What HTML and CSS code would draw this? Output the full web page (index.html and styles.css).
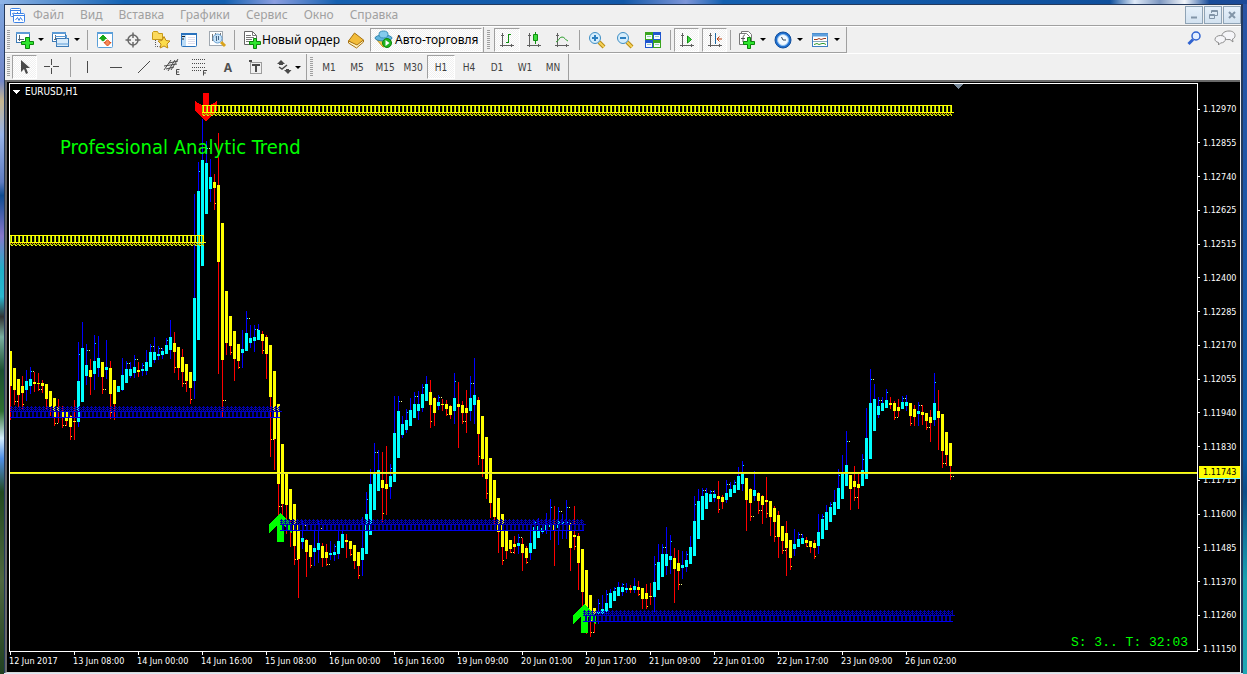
FILE: index.html
```html
<!DOCTYPE html>
<html lang="ru">
<head>
<meta charset="utf-8">
<title>EURUSD,H1</title>
<link rel="stylesheet" href="styles.css">
</head>
<body>
<div class="desktop">
<div class="window">
  <header class="menubar">
    <svg class="app-icon" width="15" height="15" viewBox="0 0 15 15" fill="#fff" stroke="#3c82e6"><rect x=".5" y=".5" width="10" height="8" rx="1"/><path d="M1 2.5h9M2 6l2-1 2 1 2-2"/><rect x="3.500" y="5.500" width="11" height="9" rx="1"/><path d="M4 7.500h10M5.500 12l2-2.500 1.500 3 1.500-3 2 3"/></svg>
    <nav class="menus"><button>Файл</button><button>Вид</button><button>Вставка</button><button>Графики</button><button>Сервис</button><button>Окно</button><button>Справка</button></nav>
    <div class="win-buttons">
      <button aria-label="Свернуть"><svg width="12" height="12"><path d="M3 8.500h6" stroke="#8295a8" stroke-width="2"/></svg></button>
      <button aria-label="Восстановить"><svg width="12" height="12" fill="none" stroke="#8295a8"><path d="M4.500 4V1.500h6v5H8M4 2.500h6"/><path d="M2.500 5.500h5v4h-5zM2 6.500h6"/></svg></button>
      <button aria-label="Закрыть"><svg width="12" height="12"><path d="M3 3l6 6M9 3l-6 6" stroke="#8295a8" stroke-width="2"/></svg></button>
    </div>
  </header>

  <div class="tools-row">
    <div class="toolbar">
      <i class="grip"></i>
      <button class="drop w36" aria-label="Новый график"><svg width="20" height="18"><rect x="1.500" y="1.500" width="13" height="10" fill="#fff" stroke="#3d7ab5"/><path d="M1 2h14" stroke="#5d9bd5" stroke-width="2"/><path d="M4.500 4v6M3 8.500h6" stroke="#567" fill="none"/><path d="M10.500 6.500h4v4h4v3h-4v4h-4v-4h-4v-3h4z" fill="#2ee62e" stroke="#0a860a"/></svg><b class="caret"></b></button>
      <button class="drop w36" aria-label="Профили"><svg width="20" height="18"><rect x="1.500" y="1.500" width="13" height="9" fill="#fff" stroke="#3d7ab5"/><path d="M1 2h14" stroke="#5d9bd5" stroke-width="2"/><path d="M4.500 4v5M3 8.500h3" stroke="#567"/><rect x="5.500" y="7.500" width="12" height="8" fill="#d9ecfb" stroke="#3d7ab5"/><path d="M15.500 4v4M4 5.500h11M5 13h13" stroke="#5d9bd5" fill="none"/></svg><b class="caret"></b></button>
      <i class="sep"></i>
      <button class="w28" aria-label="Обзор рынка"><svg width="18" height="18"><rect x="1.500" y="1.500" width="15" height="15" rx="1" fill="#fff" stroke="#5b9fd9"/><path d="M1 2h16" stroke="#5b9fd9" stroke-width="2"/><path d="M7 4l3.500 3.500-2 0L7 6 5.500 7.500h-2zM7 6l2 2.500-2 1.500-2-1.500z" fill="#17a817" stroke="#17a817"/><path d="M11.500 9l2 1.500v1H15l-3.500 3.500L8 11.500h1.500v-1z" fill="#f58a5a" stroke="#e0501a"/></svg></button>
      <button class="w28" aria-label="Окно данных"><svg width="18" height="18" fill="none" stroke="#686868"><circle cx="9" cy="9" r="5" stroke-width="1.500"/><path d="M9 1.500V7M9 11v5.500M1.500 9H7M11 9h5.500" stroke-width="1.500"/></svg></button>
      <button class="w28" aria-label="Навигатор"><svg width="20" height="18"><path d="M1.500 8V1.500l1-1h4l1 2h4v6h-10z" fill="#fbd95c" stroke="#c79a18"/><path d="M4.500 9v6.500h4" stroke="#555" stroke-dasharray="1 1" fill="none"/><path d="M13 5.500l2 4 4 .5-3 3 .8 4-3.800-2-3.800 2 .8-4-3-3 4-.5z" fill="#fcdc4a" stroke="#c08a12"/></svg></button>
      <button class="w28" aria-label="Терминал"><svg width="18" height="18"><rect x="1.500" y="2.500" width="15" height="13" rx="1" fill="#fff" stroke="#2a72bd"/><path d="M1 3h16" stroke="#2a72bd" stroke-width="2"/><path d="M2 4h4v11H2z" fill="#bcdcf7"/><path d="M2 5.500h3M2 8h2" stroke="#222"/><path d="M8 6.500h7M8 8.500h7M8 10.500h7M8 12.500h7" stroke="#dde"/></svg></button>
      <button class="w28" aria-label="Тестер стратегий"><svg width="19" height="19"><rect x="1.500" y="1.500" width="13" height="14" fill="#fff" stroke="#a0a8b0"/><path d="M4.500 4v7M7.500 3v5M12.500 3v3" stroke="#777"/><circle cx="9.500" cy="8.500" r="4.500" fill="#bfe0fa" fill-opacity=".85" stroke="#6aa0d0"/><path d="M8.500 6v5M10.500 6v4" stroke="#468"/><path d="M13 12l4 4" stroke="#d9a31c" stroke-width="3"/></svg></button>
      <i class="sep"></i>
      <button class="labelled order"><svg width="18" height="19"><path d="M1.500 1.500h8l4 4v9h-12z" fill="#fff" stroke="#666"/><path d="M9.500 1.500v4h4M3 5.500h5M3 7.500h8M3 9.500h6M3 11.500h5" fill="none" stroke="#777"/><path d="M10.500 8.500h3v3h4v3h-4v4h-3v-4h-4v-3h4z" fill="#2ee62e" stroke="#0a860a"/></svg><span>Новый ордер</span></button>
      <button class="w28" aria-label="MetaEditor"><svg width="18" height="18"><path d="M1.500 10l6-8 9 7-6 6z" fill="#f2bc3a" stroke="#a87312"/><path d="M1.500 10v2l8 5 7-6V9l-6.500 5z" fill="#fff3c4" stroke="#a87312"/></svg></button>
      <button class="labelled pressed"><svg width="20" height="19"><path d="M3 10l14 0-3 5.500-5 1.500z" fill="#f0c84a" stroke="#c29318"/><ellipse cx="9.500" cy="8" rx="8.500" ry="3" fill="#5fb4dd" stroke="#2f84ae"/><ellipse cx="9.500" cy="4.500" rx="4.500" ry="3.500" fill="#83cbec" stroke="#3a90b8"/><circle cx="13" cy="13" r="4.500" fill="#20b520" stroke="#0c860c"/><path d="M11.500 10l4 3-4 3z" fill="#fff"/></svg><span>Авто-торговля</span></button>
    </div>
    <div class="toolbar">
      <i class="grip"></i>
      <button class="pressed icon26" aria-label="Бары"><svg width="16" height="16" fill="none" stroke="#606060"><path d="M3.500 1v14M1 13.500h14M2 3.500h3M12.500 12v3"/><path d="M9.500 2v9M10 2.500h2M7 10.500h2" stroke="#109010"/></svg></button>
      <button class="w28" aria-label="Свечи"><svg width="16" height="16" fill="none" stroke="#606060"><path d="M3.500 1v14M1 13.500h14M2 3.500h3M12.500 12v3"/><path d="M9.500 0v12" stroke="#109010"/><path d="M7.500 2.500h4v6h-4z" fill="#3edc3e" stroke="#109010"/></svg></button>
      <button class="w28" aria-label="Линия"><svg width="16" height="16" fill="none" stroke="#606060"><path d="M3.500 1v14M1 13.500h14M2 3.500h3M12.500 12v3"/><path d="M2 10c3-1 3-5 6-5 3 0 3 3 6 4" stroke="#30a030"/></svg></button>
      <i class="sep"></i>
      <button class="w28" aria-label="Увеличить"><svg width="18" height="18"><path d="M11 11l5 5" stroke="#b98c14" stroke-width="4"/><path d="M11 11l5 5" stroke="#f6d35a" stroke-width="2"/><circle cx="7" cy="7" r="5.500" fill="#d5edfc" stroke="#3e8ec4"/><path d="M4 7h6M7 4v6" stroke="#2c7fc0" stroke-width="2"/></svg></button>
      <button class="w28" aria-label="Уменьшить"><svg width="18" height="18"><path d="M11 11l5 5" stroke="#b98c14" stroke-width="4"/><path d="M11 11l5 5" stroke="#f6d35a" stroke-width="2"/><circle cx="7" cy="7" r="5.500" fill="#d5edfc" stroke="#3e8ec4"/><path d="M4 7h6" stroke="#2c7fc0" stroke-width="2"/></svg></button>
      <button class="w28" aria-label="Упорядочить окна"><svg width="18" height="18"><path d="M1 1h8v8H1zM9 9h8v8H9z" fill="#3aa51f"/><path d="M9 1h8v8H9zM1 9h8v8H1z" fill="#1f56cf"/><path d="M2 4h6v4H2zM10 4h6v4h-6zM2 12h6v4H2zM10 12h6v4h-6z" fill="#f4faff"/><path d="M3 5.500h4M11 5.500h4M3 13.500h4M11 13.500h4" stroke="#9cb"/></svg></button>
      <i class="sep"></i>
      <button class="pressed icon25" aria-label="Автопрокрутка"><svg width="16" height="16" fill="none" stroke="#606060"><path d="M3.500 1v14M1 13.500h14M2 3.500h3M12.500 12v3"/><path d="M8.500 4l4 3.500-4 3.500z" fill="#3edc3e" stroke="#109010"/></svg></button>
      <button class="pressed icon25 gap3" aria-label="Сдвиг графика"><svg width="16" height="16" fill="none" stroke="#606060"><path d="M3.500 1v14M1 13.500h14M2 3.500h3M12.500 12v3"/><path d="M8.500 1v11" stroke="#1b6aa5"/><path d="M15 7h-5M12.500 4.500L10 7l2.500 2.500" stroke="#c0400c"/></svg></button>
      <i class="sep"></i>
      <button class="drop w37" aria-label="Индикаторы"><svg width="20" height="19"><path d="M4.500 1.500h7l3 3v8h-10z" fill="#fff" stroke="#777"/><path d="M2.500 3.500h7l3 3v8h-10z" fill="#fff" stroke="#777"/><path d="M8 5c-2 0-2 2-2 7M4 8.500h4" fill="none" stroke="#555"/><path d="M10.500 7.500h3v4h4v3h-4v4h-3v-4h-4v-3h4z" fill="#2ee62e" stroke="#0a860a"/></svg><b class="caret"></b></button>
      <button class="drop w37" aria-label="Периоды"><svg width="20" height="18"><circle cx="9" cy="9" r="8" fill="#1f6fd0" stroke="#124f9c"/><circle cx="9" cy="9" r="5.500" fill="#f3f9ff" stroke="#8fc1f0"/><path d="M7.500 6l1.500 3h3" fill="none" stroke="#345"/></svg><b class="caret"></b></button>
      <button class="drop w37" aria-label="Шаблоны"><svg width="20" height="18"><rect x="1.500" y="2.500" width="15" height="13" fill="#fff" stroke="#3a7fc2"/><path d="M1 4h16" stroke="#5d9fdd" stroke-width="3"/><path d="M3 8.500h3l2-1 2 1 3-1h2" fill="none" stroke="#a03c1c"/><path d="M2 10.500h14" stroke="#8ab"/><path d="M3 13.500l3-1 2 1 3-1 2 0 2 1" fill="none" stroke="#2f9a2f"/></svg><b class="caret"></b></button>
    </div>
    <div class="right-tools">
      <button aria-label="Поиск"><svg width="14" height="15"><circle cx="9" cy="5" r="4" fill="#e4efff" stroke="#2f62d0" stroke-width="1.500"/><path d="M6 8.500L1.500 13" stroke="#2f62d0" stroke-width="3"/></svg></button>
      <button aria-label="Сообщения"><svg width="23" height="16" fill="#f5f5f8" stroke="#8d8d8d"><path d="M15 1c4 0 6 2 6 4.500 0 2-1 3-2.500 3.500l.5 3-3-2.500C10 10 8 8 8 5.500S11 1 15 1z"/><path d="M6.500 5.500c3 0 5 1.500 5 3.500s-2 4-5 4l-2 2v-2.500C2 12 1 10.500 1 9.500c0-2.500 2.500-4 5.500-4z"/></svg></button>
    </div>
  </div>

  <div class="tools-row second">
    <div class="toolbar">
      <i class="grip"></i>
      <button class="pressed icon25" aria-label="Курсор"><svg width="12" height="16"><path d="M2 1v12l3-3 2 5 2-1-2-5h4z" fill="#4a4a4a"/></svg></button>
      <button class="w30" aria-label="Перекрестие"><svg width="16" height="16" stroke="#4a4a4a"><path d="M7.500 0v6M7.500 9v6M0 7.500h6M9 7.500h6"/></svg></button>
      <i class="sep"></i>
      <button class="w28" aria-label="Вертикальная линия"><svg width="16" height="16" stroke="#4a4a4a"><path d="M7.500 2v12"/></svg></button>
      <button class="w28" aria-label="Горизонтальная линия"><svg width="16" height="16" stroke="#4a4a4a"><path d="M2 8.500h12"/></svg></button>
      <button class="w28" aria-label="Трендовая линия"><svg width="16" height="16" stroke="#4a4a4a"><path d="M2 14L14 2"/></svg></button>
      <button class="w28" aria-label="Канал"><svg width="18" height="18" fill="none" stroke="#4a4a4a"><path d="M1 12L8 2M5 13L12 2M8 12L15 1M1 8l13-2M3 11l8-2M6 5l9-2"/><path d="M16.500 11.500h-3v5h3M13 14h3"/></svg></button>
      <button class="w28" aria-label="Фибоначчи"><svg width="18" height="18" fill="none" stroke="#4a4a4a"><path d="M1 1.500h14M1 5.500h14M1 9.500h14M1 12.500h9" stroke-dasharray="1 1"/><path d="M16 12.500h-3.500v5M12 15h3"/></svg></button>
      <button class="w28 letter" aria-label="Текст">A</button>
      <button class="w28" aria-label="Метка"><svg width="16" height="16"><rect x="2.500" y="3.500" width="11" height="11" fill="none" stroke="#4a4a4a" stroke-dasharray="1 1"/><path d="M1 1h3v2H1z" fill="#4a4a4a"/><path d="M4 6h8M8 6v7" stroke="#4a4a4a" stroke-width="2"/></svg></button>
      <button class="shapes" aria-label="Стрелки"><svg width="16" height="16" fill="#4a4a4a"><path d="M5 1l4 4H7v1H3V5H1zM12 15l-4-4h2v-1h3v1h2.500z"/><path d="M3 8l3 2 5-4" fill="none" stroke="#4a4a4a" stroke-width="1.500"/></svg><b class="caret"></b></button>
    </div>
    <div class="toolbar frames">
      <i class="grip"></i>
      <button>M1</button><button>M5</button><button>M15</button><button>M30</button><button class="pressed">H1</button><button>H4</button><button>D1</button><button>W1</button><button>MN</button>
    </div>
  </div>

  <main class="chart">
    <section class="plot">
      <svg class="canvas" width="100%" height="100%" shape-rendering="crispEdges">
        <defs>
          <pattern id="yellow" width="4" height="11" patternUnits="userSpaceOnUse"><path d="M0 0h4v1H0zM0 7h4v1H0z" fill="#ff0"/><path d="M0 1h1v6H0z" fill="#9acd00"/><path d="M1 1h1v6H1z" fill="#ff0"/><path d="M0 8h1v1H0zM2 8h1v1H2z" fill="#e09000"/><path d="M3 9h1v1H3zM1 9h1v1H1zM0 9h1v1H0z" fill="#a8d000"/><path d="M1 10h2v1H1z" fill="#ee0"/></pattern>
          <pattern id="blue" width="4" height="12" patternUnits="userSpaceOnUse"><path d="M1 0h1v1H1zM0 1h3v1H0zM1 2h1v1H1zM3 2h1v1H3zM0 3h3v1H0zM1 4h1v1H1zM3 4h1v1H3z" fill="#0000b0"/><path d="M2 6h2v5H2z" fill="#0000a0"/><path d="M0 5h4v1H0z" fill="#0000c0"/><path d="M0 11h4v1H0z" fill="#0000f0"/></pattern>
          <path id="up" d="M0 0L12 11V20L4 13V29H-3V13L-11 20V11z"/>
        </defs>
        <g transform="translate(-10 -84)">
          <g id="candles"></g>
          <path d="M203 93h6v13l8-5v9l-11 12-11-12v-9l8 5z" fill="#f00"/>
          <use href="#up" x="280" y="513" fill="#0f0"/>
          <use href="#up" x="584" y="604" fill="#0f0"/>
          <g id="bands"></g>
          <path d="M953 84h10l-5 5z" fill="#778899"/>
          <path d="M12 90h8l-4 4z" fill="#fff"/>
        </g>
        <rect x="0" y="388" width="100%" height="1" fill="#ff0"/>
        <rect x="0" y="389" width="100%" height="1" fill="#dce63c"/>
      </svg>
      <span class="symbol">EURUSD,H1</span>
      <span class="title">Professional Analytic Trend</span>
      <span class="timer">S: 3.. T: 32:03</span>
    </section>
    <aside class="prices">
      <span>1.12970</span><span>1.12855</span><span>1.12740</span><span>1.12625</span><span>1.12515</span><span>1.12400</span><span>1.12285</span><span>1.12170</span><span>1.12055</span><span>1.11940</span><span>1.11830</span><span>1.11715</span><span>1.11600</span><span>1.11485</span><span>1.11370</span><span>1.11260</span><span>1.11150</span>
      <strong class="current">1.11743</strong>
    </aside>
    <footer class="times">
      <span>12 Jun 2017</span><span>13 Jun 08:00</span><span>14 Jun 00:00</span><span>14 Jun 16:00</span><span>15 Jun 08:00</span><span>16 Jun 00:00</span><span>16 Jun 16:00</span><span>19 Jun 09:00</span><span>20 Jun 01:00</span><span>20 Jun 17:00</span><span>21 Jun 09:00</span><span>22 Jun 01:00</span><span>22 Jun 17:00</span><span>23 Jun 09:00</span><span>26 Jun 02:00</span>
    </footer>
  </main>
</div>
</div>
<script src="chart.js"></script>
</body>
</html>
```
FILE: styles.css
```css
* { box-sizing: border-box; }
body { margin: 0; font-family: "Noto Sans", "Open Sans", sans-serif; font-size: 12px; }
button { border: 0; padding: 0; margin: 0; background: none; font: inherit; color: inherit; }
.desktop {
  min-height: 100vh; display: flex; padding: 4px 4px 1px 4px;
  background:
    linear-gradient(90deg, transparent 89%, #dfeaf8 91%, #7d97c0 93%, #f2f5fa 95%, transparent 97%) top / 100% 4px no-repeat,
    linear-gradient(90deg, #8fb4e6, #1463b4 10%, #1360b0 18%, #8a9ee0 22%, #1560b0 27%, #1258a8 50%, #7c95d8 55%, #1460b0 58%, #0f4f9c 90%, #1c4a98) top / 100% 4px no-repeat,
    linear-gradient(#7fa8e0, #7286c8 12%, #c8b890 15%, #98b4e8 20%, #5f7cc0 27%, #0d4c90 29%, #8877cc 35%, #1fb0c8 40%, #2ab8d0 44%, #333 47%, #7ab0a0 50%, #1c5030 55%, #2f7030 61%, #d8f0ff 65%, #5090e8 68%, #224a20 73%, #506840 86%, #204020) left / 4px 100% no-repeat,
    linear-gradient(#2a54a4, #1a58a8 40%, #0c5ca4 68%, #0c4c88 73%, #18a0b0 86%, #20a8b4) right / 4px 100% no-repeat,
    #dbe6f2;
}
.window { flex: 1; min-width: 0; display: flex; flex-direction: column; background: #f0f0f0; border: 1px solid #24395c; border-width: 1px 2px 0 1px; }
.menubar { height: 21px; flex: none; display: flex; align-items: center; border-bottom: 1px solid #a0a0a0; padding-left: 5px; }
.menus { display: flex; color: #a0a0a0; }
.menus button { padding: 0 8px; line-height: 20px; }
.win-buttons { margin-left: auto; display: flex; gap: 1px; }
.win-buttons button { width: 18px; height: 18px; border: 1px solid #8fa3b5; background: linear-gradient(#e6f0fa, #d3e2f0); display: grid; place-items: center; }
.tools-row { display: flex; flex: none; height: 27px; border-top: 1px solid #fff; }
.toolbar { display: flex; align-items: center; border-right: 1px solid #a0a0a0; border-bottom: 1px solid #a0a0a0; padding-right: 1px; }
.second .toolbar { border-bottom: 0; padding-right: 0; }
.toolbar button { display: flex; align-items: center; justify-content: center; flex: none; height: 24px; }
.grip { width: 3px; height: 20px; margin: 0 2px; background: repeating-linear-gradient(#a0a0a0 0 1px, #f0f0f0 1px 2px); }
.toolbar + .toolbar .grip { margin: 0 4px 0 3px; }
.sep { width: 1px; height: 20px; margin: 0 3px; background: #a0a0a0; }
.w28 { width: 28px; }
.w30 { width: 30px; }
.w36 { width: 36px; }
.w37 { width: 37px; }
.toolbar .drop { justify-content: flex-start; padding-left: 3px; }
.toolbar .shapes { width: 36px; justify-content: flex-start; padding-left: 6px; }
.icon25 { width: 25px; }
.icon26 { width: 26px; }
.gap3.gap3 { margin-left: 3px; }
.pressed { border: 1px solid; border-color: #a0a0a0 #fff #fff #a0a0a0; background: repeating-conic-gradient(#fff 0 25%, #f0f0f0 0 50%) 0 0 / 2px 2px; }
.toolbar .labelled { padding: 0 3px; gap: 1px; white-space: nowrap; color: #000; }
.toolbar .order { padding: 0 2px 0 5px; }
.caret { width: 0; height: 0; margin-left: 3px; border: 3px solid transparent; border-top-color: #000; border-bottom: 0; }
.letter { font-size: 12px; font-weight: bold; color: #505050; }
.frames button { width: 28px; font: 10px "DejaVu Sans Condensed", sans-serif; color: #404040; }
.toolbar + .frames .grip { margin-right: 2px; }
.second .frames { padding-right: 1px; }
.right-tools { margin-left: auto; display: flex; align-items: center; gap: 13px; padding-right: 4px; }
.chart {
  flex: 1; display: grid; grid-template: minmax(0, 1fr) 20px / minmax(0, 1fr) 42px;
  padding: 1px 0 0 2px; margin-right: 1px;
  background: #000; border: 2px solid #696969; border-right: 0; border-bottom: 1px solid #d8d8d8;
  color: #fff; font: 9px/12px "DejaVu Sans Condensed", sans-serif;
}
.plot { position: relative; border: 1px solid #fff; min-width: 0; overflow: hidden; }
.canvas { display: block; position: absolute; inset: 0; }
.symbol { position: absolute; left: 15px; top: 2px; font-size: 10px; }
.title { position: absolute; left: 50px; top: 51px; font: 20px/24px "DejaVu Sans Condensed", sans-serif; color: #0f0; white-space: nowrap; }
.timer { position: absolute; right: 9px; bottom: 0; font: 13px/16px "Liberation Mono", monospace; color: #0f0; white-space: pre; }
.prices { position: relative; display: flex; flex-direction: column; justify-content: space-between; padding-top: 20px; margin-bottom: -3px; }
.prices span { display: flex; align-items: center; gap: 3px; }
.prices span::before { content: ""; width: 2px; height: 1px; background: #fff; }
.current { position: absolute; left: 1px; right: 0; top: 383px; height: 13px; padding-left: 4px; background: #ff0; color: #000; font-weight: normal; border-bottom: 1px solid #7ff; }
.times { display: flex; overflow: hidden; white-space: nowrap; grid-column: 1 / -1; }
.times span { flex: none; width: 64px; }
.times span::before { content: ""; display: block; width: 1px; height: 3px; margin-left: 1px; background: #fff; }
```
FILE: chart.js
```js
// One bar per entry: direction (c = rising, y = falling), body top, body bottom, high, low.
const bars = `y351,386,351,420 y368,390,368,405 y379,395,379,407 y386,393,376,409 c381,390,370,401 c379,386,367,394 y382,384,372,392 y383,384,373,391 y383,386,380,393 y384,399,384,410
y391,407,391,416 y398,417,398,426 y407,412,399,423 y411,417,406,428 y412,421,412,426 y416,427,415,440 y421,422,400,440 c381,422,342,427 c348,402,322,402 c365,376,344,385
y370,377,359,395 c361,374,335,390 c358,368,336,377 y362,377,362,394 c367,370,340,379 y368,394,361,419 y380,404,380,420 c386,392,386,392 c375,390,358,391 c369,383,361,383
c369,376,362,378 c367,373,355,378 y370,372,362,377 c369,371,363,376 c362,371,350,375 c352,367,344,367 c352,360,337,363 c354,356,346,360 c351,355,348,359 c345,354,338,354
c337,350,320,359 y343,352,332,373 y347,368,347,380 y357,372,349,387 y364,381,364,392 y372,388,372,404 c298,381,194,399 c191,340,162,340 c160,266,119,266 c163,214,141,214
c177,189,159,202 y182,188,174,210 y185,262,133,374 y223,360,223,417 y291,343,291,355 y316,346,316,355 y331,359,331,381 y344,361,344,369 c349,353,330,368 c333,351,311,351
c338,343,325,348 c337,341,325,352 c330,340,324,340 y334,341,331,354 y337,354,335,379 y345,397,345,457 y371,439,371,470 y404,484,404,516 y444,504,444,520 y473,505,473,534
y489,520,489,547 y504,546,504,565 y524,559,524,598 c538,542,520,549 y540,552,539,577 y545,557,545,568 c548,552,530,566 c543,550,521,563 y546,558,543,567 y552,558,544,566
c553,555,541,560 c552,555,544,561 c541,554,528,559 c534,548,528,548 y540,542,534,558 y541,549,541,556 y545,561,545,569 y552,566,552,579 c548,560,517,576 c514,554,492,554
c484,535,469,535 c473,510,443,510 c470,491,450,491 y480,488,452,523 y484,489,446,515 c476,487,464,499 c433,482,396,482 c411,458,396,458 c424,435,416,438 c420,430,409,433
c410,426,398,426 c404,418,392,418 c404,411,391,420 c394,408,384,412 c384,401,376,401 y392,405,380,428 y398,413,397,426 c402,406,395,410 y404,405,399,411 y404,409,400,416
y406,415,405,419 c398,411,373,424 y404,407,382,448 y405,413,401,424 y408,413,390,433 c398,411,376,421 c395,405,358,424 y400,434,397,465 y416,459,416,477 y437,479,437,499
y458,503,458,518 y480,517,480,528 y498,532,498,553 y514,547,514,565 y531,551,531,559 y540,549,540,553 y544,547,536,554 c543,546,534,554 y544,553,538,571 y548,558,546,564
c543,553,531,560 c527,549,520,549 c526,538,518,538 c528,532,525,534 c524,530,513,534 c524,527,499,540 y525,530,506,566 c521,528,507,545 c522,524,514,539 c522,523,500,539
y523,548,523,571 y535,537,506,550 y536,563,533,590 y549,592,549,616 y570,612,570,634 y595,621,595,637 y608,614,608,633 c612,614,599,624 c609,614,595,616 c603,612,590,618
c593,608,589,608 c591,601,587,601 c587,596,582,596 c587,592,583,596 c588,590,583,593 y588,590,585,593 c586,590,578,593 y587,590,581,596 y588,599,588,609 y593,599,584,609
y596,597,583,605 c582,597,556,612 c562,590,544,590 c554,577,544,577 c554,566,527,575 c556,560,535,574 y558,569,548,603 y563,571,550,590 c565,568,551,579 c560,567,551,572
c547,564,536,564 c521,556,496,556 c501,539,489,539 c496,520,488,520 c493,509,488,509 c494,502,490,502 c494,498,490,502 y496,499,481,513 y497,502,495,509 c493,500,480,503
c489,497,482,497 c485,493,480,493 c476,490,467,490 c474,484,461,491 y478,500,478,531 y489,503,488,521 c490,496,471,501 y493,501,492,514 y496,505,495,524 y500,502,477,518
y501,517,501,536 y508,522,506,542 y515,537,511,558 y526,541,526,554 y533,548,521,576 y540,558,540,570 c544,549,529,556 c539,547,532,547 c538,544,534,544 y540,543,537,547
y541,547,541,553 y543,548,540,559 c532,546,514,554 c519,539,514,539 c512,530,505,530 c507,522,502,522 c502,515,490,515 c488,509,469,509 c474,499,455,499 c465,486,431,486
y475,489,475,510 y481,487,466,501 y484,488,474,509 c470,486,454,486 c438,479,408,479 c403,459,369,459 c399,431,384,431 c406,415,397,418 c403,411,397,411 c400,408,389,408
y403,405,397,409 y403,411,401,420 y407,411,399,417 c402,409,396,409 c402,406,395,411 y403,416,403,426 y409,417,405,426 c411,414,402,426 y412,415,405,425 y413,421,413,430
y417,423,410,442 c403,420,373,426 y411,418,390,450 y414,451,414,468 y432,455,432,466 y443,466,443,480`.split(/\s+/);

const NS = "http://www.w3.org/2000/svg";
const rect = (parent, x, y, width, height, fill) => {
  const node = document.createElementNS(NS, "rect");
  Object.entries({ x, y, width, height, fill }).forEach(([k, v]) => node.setAttribute(k, v));
  parent.append(node);
  return node;
};

const candles = document.getElementById("candles");
bars.forEach((bar, i) => {
  const rising = bar[0] === "c";
  const [top, bottom, high, low] = bar.slice(1).split(",").map(Number);
  const x = 10 + i * 4;
  rect(candles, x, high, 1, low - high, rising ? "#00f" : "#f00");
  rect(candles, x - 1, top, 3, bottom - top, rising ? "#0ff" : "#ff0");
  const tick = rising ? Math.round(high + (top - high) * 0.3) : Math.round(low - (low - bottom) * 0.3);
  if (i % 2 && Math.abs(tick - (rising ? top : bottom)) > 2) {
    rect(candles, x + 1, tick, 1, 1, rising ? "#0ff" : "#ff0");
    if (i % 3) rect(candles, x + 3, tick, 1, 1, "#ff8");
  }
});

const bands = document.getElementById("bands");
[["yellow", 10, 235, 194, 11], ["yellow", 202, 105, 750, 11],
 ["blue", 10, 406, 270, 12], ["blue", 280, 519, 304, 12], ["blue", 583, 610, 370, 12]].forEach(([kind, x, y, w, h]) => {
  const band = rect(bands, 0, 0, w, h, `url(#${kind})`);
  band.setAttribute("transform", `translate(${x} ${y})`);
  const tip = kind === "yellow" ? 7 : 5;
  rect(bands, x + w, y + tip, 2, 1, kind === "yellow" ? "#ff0" : "#0000c8");
});
```
